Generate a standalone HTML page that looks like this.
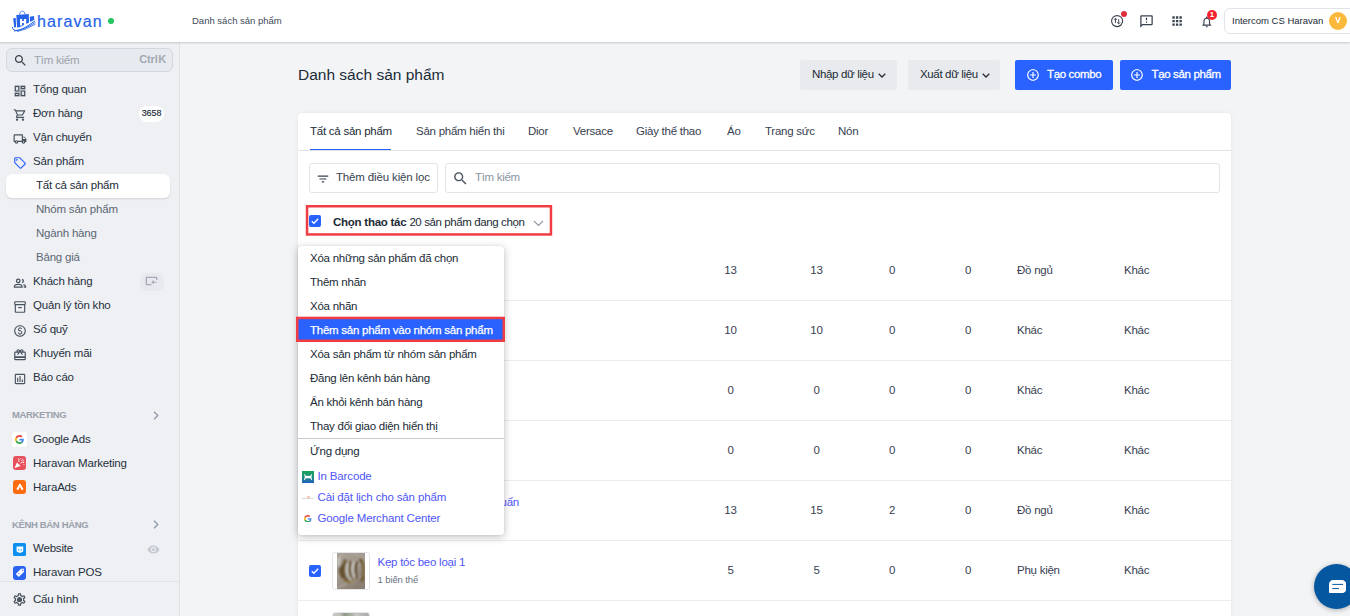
<!DOCTYPE html>
<html lang="vi">
<head>
<meta charset="utf-8">
<title>Danh sách sản phẩm</title>
<style>
*{box-sizing:border-box;margin:0;padding:0}
html,body{width:1350px;height:616px;overflow:hidden}
body{font-family:"Liberation Sans",Arial,sans-serif;font-size:12px;color:#212b36;background:#f3f4f6;position:relative}
.abs{position:absolute}
/* header */
#hdr{position:absolute;left:0;top:0;width:1350px;height:42px;background:#fff;box-shadow:0 1px 2px rgba(0,0,0,.18);z-index:20}
#hdr .crumb{position:absolute;left:192px;top:15px;font-size:9.5px;color:#414a57;line-height:12px}
#logo-text{position:absolute;left:37px;top:11.500px;font-size:16px;line-height:20px;color:#2563eb;letter-spacing:1.150px;font-weight:400;-webkit-text-stroke:.2px #2563eb}
#dot{position:absolute;left:107.500px;top:17.800px;width:6px;height:6px;border-radius:50%;background:#22c55e}
#acct{position:absolute;left:1224px;top:8px;width:140px;height:26px;border:1px solid #e1e4ea;border-radius:6px;background:#fff}
#acct span{position:absolute;left:7px;top:6px;font-size:9.5px;line-height:12px;color:#212b36;white-space:nowrap}
#avatar{position:absolute;left:1329px;top:11.600px;width:18px;height:18px;border-radius:50%;background:#fbb83a;color:#fff;font-size:8.500px;font-weight:700;text-align:center;line-height:17.500px}
/* sidebar */
#side{position:absolute;left:0;top:42px;width:180px;height:574px;background:#eef0f3;border-right:1px solid #dfe2e7;z-index:10}
#search{position:absolute;left:6px;top:6px;width:167px;height:24px;border:1px solid #d3d7de;border-radius:6px;background:#e7eaee}
#search .ph{position:absolute;left:27px;top:5px;font-size:11.5px;line-height:13px;color:#9ca3af;letter-spacing:-.25px}
#search .kb{position:absolute;right:6px;top:4px;font-size:11px;line-height:13px;color:#a3a9b5;font-weight:700;word-spacing:-2.500px;letter-spacing:-.1px}
.nav{position:absolute;left:33px;font-size:11.5px;line-height:14px;color:#27313e;white-space:nowrap;letter-spacing:-.2px}
.sub{position:absolute;left:36px;font-size:11.5px;line-height:14px;color:#5c6773;white-space:nowrap;letter-spacing:-.2px}
.ico{position:absolute;left:12px;width:14px;height:14px}
#active{position:absolute;left:6px;top:131.800px;width:164px;height:24px;background:#fff;border-radius:6px;box-shadow:0 1px 2px rgba(0,0,0,.12)}
.sec{position:absolute;left:12px;font-size:9.500px;line-height:11px;color:#9aa1ad;font-weight:700;letter-spacing:-.35px;margin-top:-.5px}
.badge{position:absolute;left:139px;top:63.700px;width:25px;height:16px;border-radius:8px;background:#fff;font-size:9px;line-height:14.600px;text-align:center;color:#212b36;letter-spacing:-.1px;-webkit-text-stroke:.15px #212b36}
#sidefoot{position:absolute;left:0;top:539px;width:179px;height:35px;border-top:1px solid #e1e4e8;background:#eef0f3}
.app{position:absolute;left:12.700px;width:13.800px;height:13.800px;border-radius:3px;overflow:hidden}
/* main */
h1{position:absolute;left:298px;top:65.200px;font-size:15.5px;line-height:20px;font-weight:400;color:#212b36;white-space:nowrap;letter-spacing:0}
.btn-g{position:absolute;top:60px;height:29.500px;background:#e8eaed;border-radius:3px;letter-spacing:-.35px;font-size:11.5px;line-height:28px;color:#212b36;text-align:left;padding-left:12px;white-space:nowrap}
.btn-b{position:absolute;top:60px;height:30px;background:#2962ff;border-radius:2px;font-size:11.5px;line-height:29px;color:#fff;white-space:nowrap;letter-spacing:-.35px;-webkit-text-stroke:.3px #fff}
.btn-b svg{position:absolute;top:7.800px;width:14px;height:14px}
#card{position:absolute;left:298px;top:113px;width:933px;height:520px;background:#fff;border-radius:3px;box-shadow:0 0 2px rgba(0,0,0,.06),0 0 7px rgba(0,0,0,.035)}
.tab{position:absolute;top:124px;letter-spacing:-.25px;font-size:11.5px;line-height:14px;color:#374151;white-space:nowrap}
#tabline{position:absolute;left:298px;top:150px;width:933px;height:1px;background:#dfe3e8}
#tabact{position:absolute;left:310px;top:148.500px;width:81px;height:1.500px;background:#2962ff}
#fbtn{position:absolute;left:309px;top:163px;width:129px;height:30px;border:1px solid #e1e4e8;border-radius:3px;background:#fff}
#fbtn span{position:absolute;left:26px;top:6px;letter-spacing:-.15px;font-size:11.5px;line-height:14px;color:#374151;white-space:nowrap}
#sbox{position:absolute;left:445px;top:163px;width:775px;height:30px;border:1px solid #e1e4e8;border-radius:3px;background:#fff}
#sbox span{position:absolute;left:29px;top:6px;letter-spacing:-.3px;font-size:11.5px;line-height:14px;color:#8c95a1}
#redbox{position:absolute;left:305.800px;top:205px;width:246.400px;height:30.700px;border:2.500px solid #f03d44}
.cb{position:absolute;width:12px;height:12px;background:#2962ff;border-radius:2px}
.row{position:absolute;left:298px;width:933px;height:1px;background:#ebedf0}
.c{position:absolute;letter-spacing:-.25px;font-size:11.5px;line-height:14px;color:#374151;white-space:nowrap}
.num{text-align:center;width:40px}
.lnk{color:#5055f6}
.thumb{position:absolute;left:332px;width:37.800px;height:38px;border:1px solid #e3e5e9;border-radius:3px;background:#fff;overflow:hidden}
.thumb .img{position:absolute;left:4px;top:0;width:28.500px;height:36px}
/* dropdown */
#dd{position:absolute;left:298px;top:246px;width:206px;height:289px;background:#fff;border-radius:3px;box-shadow:0 2px 8px rgba(0,0,0,.25),0 0 1px rgba(0,0,0,.2);z-index:30}
#dd .it{position:absolute;left:12px;letter-spacing:-.25px;font-size:11.5px;line-height:14px;color:#212b36;white-space:nowrap}
#dd .lk{position:absolute;left:19.500px;letter-spacing:-.15px;font-size:11.5px;line-height:14px;color:#5055f6;white-space:nowrap}
#ddhl{position:absolute;left:-1px;top:71.500px;width:207px;height:23.800px;background:#2962ff}
#ddsep{position:absolute;left:0;top:192px;width:206px;height:1px;background:#c8ccd2}
#chat{position:absolute;left:1313.800px;top:563.500px;width:45px;height:45px;border-radius:50%;background:#0557a0;box-shadow:0 1px 5px rgba(0,0,0,.3);z-index:40}
</style>
</head>
<body>

<!-- main content -->
<h1>Danh sách sản phẩm</h1>
<div class="btn-g" style="left:800px;width:97px">Nhập dữ liệu<svg class="abs" style="left:77.5px;top:13px;width:8px;height:5px" viewBox="0 0 8 5" fill="none" stroke="#212b36" stroke-width="1.250"><path d="M.7.700L4 4l3.300-3.300"/></svg></div>
<div class="btn-g" style="left:908px;width:92px">Xuất dữ liệu<svg class="abs" style="left:73.5px;top:13px;width:8px;height:5px" viewBox="0 0 8 5" fill="none" stroke="#212b36" stroke-width="1.250"><path d="M.7.700L4 4l3.300-3.300"/></svg></div>
<div class="btn-b" style="left:1015px;width:98px;padding-left:32px"><svg style="left:11px" viewBox="0 0 24 24" fill="#fff"><path d="M13 7h-2v4H7v2h4v4h2v-4h4v-2h-4V7zm-1-5C6.480 2 2 6.480 2 12s4.480 10 10 10 10-4.480 10-10S17.520 2 12 2zm0 18c-4.410 0-8-3.590-8-8s3.590-8 8-8 8 3.590 8 8-3.590 8-8 8z"/></svg>Tạo combo</div>
<div class="btn-b" style="left:1120px;width:111px;padding-left:31.500px"><svg style="left:10.300px" viewBox="0 0 24 24" fill="#fff"><path d="M13 7h-2v4H7v2h4v4h2v-4h4v-2h-4V7zm-1-5C6.480 2 2 6.480 2 12s4.480 10 10 10 10-4.480 10-10S17.520 2 12 2zm0 18c-4.410 0-8-3.590-8-8s3.590-8 8-8 8 3.590 8 8-3.590 8-8 8z"/></svg>Tạo sản phẩm</div>

<div id="card"></div>
<div class="tab" style="left:310px;color:#212b36">Tất cả sản phẩm</div>
<div class="tab" style="left:416px">Sản phẩm hiển thi</div>
<div class="tab" style="left:528px">Dior</div>
<div class="tab" style="left:573px">Versace</div>
<div class="tab" style="left:636px">Giày thể thao</div>
<div class="tab" style="left:727px">Áo</div>
<div class="tab" style="left:765px">Trang sức</div>
<div class="tab" style="left:838px">Nón</div>
<div id="tabline"></div>
<div id="tabact"></div>

<div id="fbtn"><svg class="abs" style="left:5.500px;top:7.500px;width:14px;height:14px" viewBox="0 0 24 24" fill="#3a4350"><path d="M10 18h4v-2h-4v2zM3 6v2h18V6H3zm3 7h12v-2H6v2z"/></svg><span>Thêm điều kiện lọc</span></div>
<div id="sbox"><svg class="abs" style="left:5.500px;top:5.500px;width:17px;height:17px" viewBox="0 0 24 24" fill="#4f5763"><path d="M15.5 14h-.79l-.28-.27C15.410 12.590 16 11.110 16 9.500 16 5.910 13.090 3 9.500 3S3 5.910 3 9.500 5.910 16 9.500 16c1.610 0 3.090-.59 4.230-1.570l.27.28v.79l5 4.990L20.490 19l-4.990-5zm-6 0C7.010 14 5 11.990 5 9.500S7.010 5 9.500 5 14 7.010 14 9.500 11.990 14 9.500 14z"/></svg><span>Tìm kiếm</span></div>

<svg class="abs" style="left:305px;top:204px;width:249px;height:33px" viewBox="0 0 249 33"><rect x="2.050" y="2.250" width="243.900" height="28.200" fill="none" stroke="#f03d44" stroke-width="2.500"/></svg>
<div class="cb" style="left:309px;top:215px"><svg viewBox="0 0 12 12" style="position:absolute;left:0;top:0;width:12px;height:12px" fill="none" stroke="#fff" stroke-width="1.300"><path d="M2.800 6.200l2.100 2.100 4.300-4.600"/></svg></div>
<div class="c" style="left:333px;top:215px;color:#212b36"><b>Chọn thao tác</b> <span style="letter-spacing:-.4px">20 sản phẩm đang chọn</span></div>

<svg class="abs" style="left:532.500px;top:219.800px;width:11px;height:6.600px" viewBox="0 0 10 6" fill="none" stroke="#8c95a1" stroke-width="1"><path d="M.8.800L5 5l4.200-4.200"/></svg>
<!-- rows -->
<div class="row" style="top:300px"></div>
<div class="row" style="top:360px"></div>
<div class="row" style="top:420px"></div>
<div class="row" style="top:480px"></div>
<div class="row" style="top:540px"></div>
<div class="row" style="top:600px"></div>

<div class="c num" style="left:710.500px;top:263px">13</div><div class="c num" style="left:796.500px;top:263px">13</div><div class="c num" style="left:872px;top:263px">0</div><div class="c num" style="left:948px;top:263px">0</div><div class="c" style="left:1017px;top:263px">Đồ ngủ</div><div class="c" style="left:1124px;top:263px">Khác</div>
<div class="c num" style="left:710.500px;top:323px">10</div><div class="c num" style="left:796.500px;top:323px">10</div><div class="c num" style="left:872px;top:323px">0</div><div class="c num" style="left:948px;top:323px">0</div><div class="c" style="left:1017px;top:323px">Khác</div><div class="c" style="left:1124px;top:323px">Khác</div>
<div class="c num" style="left:710.500px;top:383px">0</div><div class="c num" style="left:796.500px;top:383px">0</div><div class="c num" style="left:872px;top:383px">0</div><div class="c num" style="left:948px;top:383px">0</div><div class="c" style="left:1017px;top:383px">Khác</div><div class="c" style="left:1124px;top:383px">Khác</div>
<div class="c num" style="left:710.500px;top:443px">0</div><div class="c num" style="left:796.500px;top:443px">0</div><div class="c num" style="left:872px;top:443px">0</div><div class="c num" style="left:948px;top:443px">0</div><div class="c" style="left:1017px;top:443px">Khác</div><div class="c" style="left:1124px;top:443px">Khác</div>
<div class="c num" style="left:710.500px;top:503px">13</div><div class="c num" style="left:796.500px;top:503px">15</div><div class="c num" style="left:872px;top:503px">2</div><div class="c num" style="left:948px;top:503px">0</div><div class="c" style="left:1017px;top:503px">Đồ ngủ</div><div class="c" style="left:1124px;top:503px">Khác</div>
<div class="c num" style="left:710.500px;top:563px">5</div><div class="c num" style="left:796.500px;top:563px">5</div><div class="c num" style="left:872px;top:563px">0</div><div class="c num" style="left:948px;top:563px">0</div><div class="c" style="left:1017px;top:563px">Phụ kiện</div><div class="c" style="left:1124px;top:563px">Khác</div>
<div class="c lnk" style="right:831px;top:495px;font-size:11.500px;letter-spacing:-.25px">Đồ bộ ngủ mặc nhà cho bé Tuấn</div>
<div class="cb" style="left:309px;top:565px"><svg viewBox="0 0 12 12" style="position:absolute;left:0;top:0;width:12px;height:12px" fill="none" stroke="#fff" stroke-width="1.300"><path d="M2.800 6.200l2.100 2.100 4.300-4.600"/></svg></div>
<div class="thumb" style="top:552px"><svg class="abs" style="left:4.200px;top:0;width:28.300px;height:36px" viewBox="0 0 28 36" preserveAspectRatio="none">
  <defs><filter id="bl" x="-20%" y="-20%" width="140%" height="140%"><feGaussianBlur stdDeviation=".8"/></filter><linearGradient id="tg" x1="0" y1="0" x2=".6" y2="1"><stop offset="0" stop-color="#aba299"/><stop offset=".55" stop-color="#a0968b"/><stop offset="1" stop-color="#8a7e72"/></linearGradient></defs>
  <rect width="28" height="36" fill="url(#tg)"/>
  <g filter="url(#bl)" fill="none" stroke-linecap="round">
    <path d="M0 24L28 8M0 35L28 22M6 0L0 9M16 0L28 5" stroke="#b5aca2" stroke-width="1"/>
    <path d="M4.500 13q-2 6 1 11" stroke="#5e4a28" stroke-width="3"/>
    <path d="M8 8q-3 9 0 17q2 4 6 4" stroke="#6b5630" stroke-width="3.200"/>
    <path d="M13.500 9q-3 9 1 18" stroke="#6a552e" stroke-width="2.600"/>
    <path d="M19.500 10q-3 7 0 15" stroke="#5e4a28" stroke-width="2.800"/>
    <path d="M23.500 7q6 9 1 20" stroke="#6b5428" stroke-width="3"/>
    <path d="M2.500 5q-2 4 0 8M10.500 11q-2 7 1 13M16.500 9q-2 8 1 15M13 25q0 3 2 5" stroke="#d9dcd6" stroke-width="1.500"/>
    <path d="M26.500 11q2 6 0 12" stroke="#a8946a" stroke-width="1"/>
    <path d="M8 28q4 2 8 0" stroke="#8d7338" stroke-width="2"/>
  </g></svg></div>
<div class="c lnk" style="left:377.500px;top:555px;font-size:11.500px;letter-spacing:-.25px">Kẹp tóc beo loại 1</div>
<div class="c" style="left:377.500px;top:573px;font-size:9.500px;color:#6b7280;letter-spacing:-.1px">1 biến thể</div>
<div class="thumb" style="top:612px"><div class="img" style="left:0;width:36px;background:linear-gradient(90deg,#c9c9c4 0%,#bfc0ba 20%,#8f9a88 32%,#a9b0a4 50%,#c5c6c4 65%,#a8aaa6 100%)"></div></div>

<!-- dropdown -->
<div id="dd">
  <div class="it" style="top:5px">Xóa những sản phẩm đã chọn</div>
  <div class="it" style="top:29px">Thêm nhãn</div>
  <div class="it" style="top:53px">Xóa nhãn</div>
  <div id="ddhl"></div><svg class="abs" style="left:-3px;top:69px;width:212px;height:29px" viewBox="0 0 212 29"><rect x="2.250" y="2.950" width="206.500" height="22.800" fill="none" stroke="#f03d44" stroke-width="2.500"/></svg>
  <div class="it" style="top:77px;color:#fff;-webkit-text-stroke:.25px #fff">Thêm sản phẩm vào nhóm sản phẩm</div>
  <div class="it" style="top:101px">Xóa sản phẩm từ nhóm sản phẩm</div>
  <div class="it" style="top:125px">Đăng lên kênh bán hàng</div>
  <div class="it" style="top:149px">Ẩn khỏi kênh bán hàng</div>
  <div class="it" style="top:173px">Thay đổi giao diện hiển thị</div>
  <div id="ddsep"></div>
  <div class="it" style="top:198px">Ứng dụng</div>

  <div class="abs" style="left:3.800px;top:224.800px;width:12.200px;height:12.200px;background:linear-gradient(180deg,#1fa35c 0%,#1c8f7a 50%,#1e5fc4 100%)"><svg viewBox="0 0 12 12" style="position:absolute;left:0;top:0;width:12.200px;height:12.200px"><path d="M2.300 3.300q1 .7.900 2.700-.1 2-.9 2.700M9.700 3.300q-1 .7-.9 2.700.1 2 .9 2.700" stroke="#fff" stroke-width="1.100" fill="none"/><path d="M3 4.800h6v2.400H3z" fill="#fff"/></svg></div>
  <div class="abs" style="left:4px;top:251.600px;width:12px;height:1.200px;background:#d9d9dc"></div>
  <div class="abs" style="left:8.500px;top:250.400px;width:3px;height:2px;background:#f3c3a8;border-radius:1px"></div>
  <svg viewBox="0 0 48 48" class="abs" style="left:6.300px;top:268.800px;width:7.600px;height:7.600px"><path fill="#EA4335" d="M24 9.500c3.540 0 6.710 1.220 9.210 3.600l6.850-6.850C35.900 2.380 30.470 0 24 0 14.620 0 6.510 5.380 2.560 13.220l7.980 6.190C12.430 13.720 17.740 9.500 24 9.500z"/><path fill="#4285F4" d="M46.980 24.550c0-1.570-.15-3.090-.38-4.550H24v9.020h12.940c-.58 2.960-2.260 5.480-4.780 7.180l7.730 6c4.510-4.180 7.090-10.360 7.090-17.650z"/><path fill="#FBBC05" d="M10.530 28.590c-.48-1.450-.76-2.990-.76-4.590s.27-3.140.76-4.590l-7.980-6.190C.92 16.460 0 20.120 0 24c0 3.880.92 7.540 2.560 10.780l7.970-6.190z"/><path fill="#34A853" d="M24 48c6.480 0 11.930-2.130 15.890-5.810l-7.730-6c-2.150 1.450-4.920 2.300-8.160 2.300-6.260 0-11.570-4.220-13.470-9.910l-7.980 6.190C6.510 42.620 14.620 48 24 48z"/></svg>
  <div class="lk" style="top:223px">In Barcode</div>
  <div class="lk" style="top:244px">Cài đặt lịch cho sản phẩm</div>
  <div class="lk" style="top:265px">Google Merchant Center</div>
</div>

<!-- sidebar -->
<div id="side">
  <svg class="ico" style="left:12.500px;top:41.5px;width:14px;height:14px" viewBox="0 0 24 24" fill="#4a5360" ><path stroke="#4a5360" stroke-width=".3" d="M19 5v2h-4V5h4M9 5v6H5V5h4m10 8v6h-4v-6h4M9 17v2H5v-2h4M21 3h-8v6h8V3zM11 3H3v10h8V3zm10 8h-8v10h8V11zm-10 4H3v6h8v-6z"/></svg>
  <svg class="ico" style="left:12.500px;top:65.5px;width:14px;height:14px" viewBox="0 0 24 24" fill="#4a5360" ><path d="M15.55 13c.75 0 1.41-.41 1.75-1.03l3.58-6.49c.37-.66-.11-1.48-.87-1.48H5.21l-.94-2H1v2h2l3.6 7.59-1.35 2.44C4.52 15.37 5.48 17 7 17h12v-2H7l1.1-2h7.45zM6.16 6h12.15l-2.76 5H8.53L6.16 6zM7 18c-1.1 0-1.99.9-1.99 2S5.9 22 7 22s2-.9 2-2-.9-2-2-2zm10 0c-1.1 0-1.99.9-1.99 2s.89 2 1.99 2 2-.9 2-2-.9-2-2-2z"/></svg>
  <svg class="ico" style="left:12.500px;top:89.5px;width:14px;height:14px" viewBox="0 0 24 24" fill="#4a5360" ><path d="M20 8h-3V4H3c-1.1 0-2 .9-2 2v11h2c0 1.66 1.34 3 3 3s3-1.34 3-3h6c0 1.66 1.34 3 3 3s3-1.34 3-3h2v-5l-3-4zm-.5 1.5l1.96 2.5H17V9.5h2.5zM6 18c-.55 0-1-.45-1-1s.45-1 1-1 1 .45 1 1-.45 1-1 1zm2.22-3c-.55-.61-1.33-1-2.22-1s-1.670.39-2.22 1H3V6h12v9H8.22zM18 18c-.55 0-1-.45-1-1s.45-1 1-1 1 .45 1 1-.45 1-1 1z"/></svg>
  <svg class="ico" style="left:12.500px;top:113.5px;width:14px;height:14px" viewBox="0 0 24 24" fill="#2962ff" ><path d="M21.41 11.58l-9-9C12.05 2.22 11.55 2 11 2H4c-1.1 0-2 .9-2 2v7c0 .55.22 1.05.59 1.42l9 9c.36.36.86.58 1.41.58s1.05-.22 1.41-.59l7-7c.37-.36.59-.86.59-1.41s-.23-1.06-.59-1.42zM13 20.010L4 11V4h7v-.01l9 9-7 7.020z"/><circle cx="6.5" cy="6.5" r="1.5"/></svg>
  <svg class="ico" style="left:12.500px;top:233.5px;width:14px;height:14px" viewBox="0 0 24 24" fill="#4a5360" ><g fill="none" stroke="#4a5360" stroke-width="2.200"><circle cx="9" cy="8.5" r="3"/><path d="M2.500 19v-1.500c0-2.200 4.300-3.300 6.500-3.300s6.500 1.100 6.500 3.300V19z"/><path d="M15.500 5.600a3 3 0 0 1 0 5.800M18 14.800c1.900.6 3.500 1.500 3.500 2.800V19h-3"/></g></svg>
  <svg class="ico" style="left:12.500px;top:257.5px;width:14px;height:14px" viewBox="0 0 24 24" fill="#4a5360" ><path d="M20 2H4c-1 0-2 .9-2 2v3.010c0 .72.430 1.340 1 1.690V20c0 1.100 1.100 2 2 2h14c.9 0 2-.9 2-2V8.700c.57-.35 1-.97 1-1.690V4c0-1.100-1-2-2-2zm-1 18H5V9h14v11zm1-13H4V4h16v3z"/><path d="M9 12h6v2H9z"/></svg>
  <svg class="ico" style="left:12.500px;top:281.5px;width:14px;height:14px" viewBox="0 0 24 24" fill="#4a5360" ><path d="M12 2C6.480 2 2 6.480 2 12s4.480 10 10 10 10-4.480 10-10S17.520 2 12 2zm0 18c-4.410 0-8-3.590-8-8s3.590-8 8-8 8 3.590 8 8-3.590 8-8 8zm.89-8.900c-1.780-.59-2.640-.96-2.640-1.900 0-1.020 1.110-1.390 1.810-1.390 1.310 0 1.790.99 1.900 1.340l1.580-.67c-.15-.44-.82-1.910-2.660-2.230V5h-1.750v1.260c-2.600.56-2.620 2.850-2.620 2.960 0 2.270 2.250 2.910 3.350 3.310 1.580.56 2.280 1.070 2.280 2.030 0 1.130-1.050 1.610-1.980 1.610-1.820 0-2.340-1.870-2.400-2.090l-1.660.67c.63 2.190 2.280 2.780 3.020 2.960V19h1.750v-1.240c.52-.09 3.020-.59 3.020-3.220.010-1.390-.6-2.610-3-3.440z"/></svg>
  <svg class="ico" style="left:12.500px;top:305.5px;width:14px;height:14px" viewBox="0 0 24 24" fill="#4a5360" ><path d="M20 6h-2.180c.11-.31.180-.65.180-1 0-1.660-1.340-3-3-3-1.050 0-1.960.54-2.500 1.350l-.5.670-.5-.68C10.960 2.540 10.050 2 9 2 7.340 2 6 3.340 6 5c0 .35.070.69.180 1H4c-1.110 0-1.990.89-1.990 2L2 19c0 1.110.89 2 2 2h16c1.110 0 2-.89 2-2V8c0-1.110-.89-2-2-2zm-5-2c.55 0 1 .45 1 1s-.45 1-1 1-1-.45-1-1 .45-1 1-1zM9 4c.55 0 1 .45 1 1s-.45 1-1 1-1-.45-1-1 .45-1 1-1zm11 15H4v-2h16v2zm0-5H4V8h5.080L7 10.830 8.620 12 12 7.400l3.380 4.600L17 10.830 14.920 8H20v6z"/></svg>
  <svg class="ico" style="left:12.500px;top:329.5px;width:14px;height:14px" viewBox="0 0 24 24" fill="#4a5360" ><path d="M9 17H7v-7h2v7zm4 0h-2V7h2v10zm4 0h-2v-4h2v4zm2 2H5V5h14v14zm0-16H5c-1.100 0-2 .9-2 2v14c0 1.100.9 2 2 2h14c1.100 0 2-.9 2-2V5c0-1.100-.9-2-2-2z"/></svg>
  <div id="search"><span class="ph">Tìm kiếm</span><span class="kb">Ctrl K</span></div>
  <svg class="ico" style="left:13px;top:11px;width:15px;height:15px" viewBox="0 0 24 24" fill="#3a424d" ><path d="M15.5 14h-.79l-.28-.27C15.410 12.590 16 11.110 16 9.500 16 5.910 13.090 3 9.500 3S3 5.910 3 9.500 5.910 16 9.500 16c1.610 0 3.090-.59 4.230-1.570l.27.28v.79l5 4.990L20.490 19l-4.990-5zm-6 0C7.010 14 5 11.990 5 9.500S7.010 5 9.500 5 14 7.010 14 9.500 11.990 14 9.500 14z"/></svg>
  <div class="nav" style="top:40px">Tổng quan</div>
  <div class="nav" style="top:64px">Đơn hàng</div>
  <div class="badge">3658</div>
  <div class="nav" style="top:88px">Vận chuyển</div>
  <div class="nav" style="top:112px">Sản phẩm</div>
  <div id="active"></div>
  <div class="sub" style="top:136px;color:#212b36">Tất cả sản phẩm</div>
  <div class="sub" style="top:160px">Nhóm sản phẩm</div>
  <div class="sub" style="top:184px">Ngành hàng</div>
  <div class="sub" style="top:208px">Bảng giá</div>
  <div class="nav" style="top:232px">Khách hàng</div>
  <div class="nav" style="top:256px">Quản lý tồn kho</div>
  <div class="nav" style="top:280px">Số quỹ</div>
  <div class="nav" style="top:304px">Khuyến mãi</div>
  <div class="nav" style="top:328px">Báo cáo</div>
  <div class="sec" style="top:367.500px">MARKETING</div>
  <div class="nav" style="top:390px">Google Ads</div>
  <div class="nav" style="top:414px">Haravan Marketing</div>
  <div class="nav" style="top:438px">HaraAds</div>
  <div class="sec" style="top:477.500px">KÊNH BÁN HÀNG</div>
  <div class="nav" style="top:499px">Website</div>
  <div class="nav" style="top:523px">Haravan POS</div>

  <div class="app" style="top:390.200px;background:#fff;left:12.200px;width:14.600px;height:14.600px"><svg viewBox="0 0 48 48" style="position:absolute;left:2.800px;top:2.800px;width:9px;height:9px"><path fill="#EA4335" d="M24 9.500c3.540 0 6.710 1.220 9.210 3.600l6.850-6.850C35.900 2.380 30.470 0 24 0 14.620 0 6.510 5.380 2.560 13.220l7.980 6.190C12.430 13.720 17.740 9.500 24 9.500z"/><path fill="#4285F4" d="M46.980 24.550c0-1.570-.15-3.090-.38-4.550H24v9.020h12.940c-.58 2.960-2.260 5.480-4.780 7.180l7.730 6c4.510-4.180 7.090-10.360 7.090-17.650z"/><path fill="#FBBC05" d="M10.530 28.590c-.48-1.450-.76-2.990-.76-4.590s.27-3.140.76-4.590l-7.980-6.190C.92 16.460 0 20.120 0 24c0 3.880.92 7.540 2.560 10.780l7.970-6.190z"/><path fill="#34A853" d="M24 48c6.480 0 11.930-2.130 15.890-5.810l-7.730-6c-2.150 1.450-4.920 2.300-8.160 2.300-6.260 0-11.570-4.220-13.470-9.910l-7.980 6.190C6.510 42.620 14.620 48 24 48z"/></svg></div>
  <div class="app" style="top:414.400px;background:#e8505b"><svg viewBox="0 0 14 14" style="position:absolute;left:0;top:0;width:13.800px;height:13.800px"><path d="M1.500 12.300L4 6.500l3.800 3.600z" fill="#fff"/><g stroke="#fff" stroke-width=".9" fill="none" stroke-linecap="round"><path d="M6 5.500q.8-1.600-.3-2.800M7.800 7q1.500-1.500 3.200-.6M8.800 4.800l1.400-1.500M11 8.800h.2M7.800 2.500h.2M10.800 5h.2"/></g></svg></div>
  <div class="app" style="top:438.400px;background:#ff6b0f"><svg viewBox="0 0 14 14" style="position:absolute;left:0;top:0;width:13.800px;height:13.800px"><g stroke="#fff" stroke-width="2" stroke-linecap="round" fill="none"><path d="M7 4.800l2.400 4.400M6.600 5.500L5 8.600"/></g><circle cx="4.700" cy="9" r="1.100" fill="#fff"/></svg></div>
  <div class="app" style="top:500.500px;background:#0c8ff0;border-radius:1.500px"><svg viewBox="0 0 14 14" style="position:absolute;left:0;top:0;width:13.800px;height:13.800px"><path d="M3.600 3.600h6.800v4.200q0 .9-.9 1.300L7 10.200 4.500 9.100q-.9-.4-.9-1.300z" fill="#fff"/><path d="M5.200 6.300h1.100v1.200H5.200zM7.700 6.300h1.100v1.200H7.700z" fill="#0c8ff0"/></svg></div>
  <div class="app" style="top:524.400px;background:#2b62f0"><svg viewBox="0 0 14 14" style="position:absolute;left:0;top:0;width:13.800px;height:13.800px"><path d="M8.200 2.800l3 .1.100 3-5.400 5.300-3.100-3.100z" fill="#fff"/><circle cx="9.800" cy="4.300" r=".7" fill="#2b62f0"/><path d="M5.600 7.200l1.200 1.200" stroke="#2b62f0" stroke-width=".9"/></svg></div>
  <svg class="abs" style="left:153px;top:368.500px;width:6px;height:9px" viewBox="0 0 6 9" fill="none" stroke="#8c95a5" stroke-width="1.200"><path d="M1 .800L4.800 4.500 1 8.200"/></svg>
  <svg class="abs" style="left:153px;top:478px;width:6px;height:9px" viewBox="0 0 6 9" fill="none" stroke="#8c95a5" stroke-width="1.200"><path d="M1 .800L4.800 4.500 1 8.200"/></svg>
  <svg class="abs" style="left:147px;top:501px;width:13px;height:13px" viewBox="0 0 24 24" fill="#c3c8d1"><path d="M12 4.500C7 4.500 2.730 7.610 1 12c1.730 4.390 6 7.500 11 7.500s9.270-3.110 11-7.500c-1.730-4.390-6-7.500-11-7.500zM12 17c-2.760 0-5-2.240-5-5s2.240-5 5-5 5 2.240 5 5-2.240 5-5 5zm0-8c-1.660 0-3 1.340-3 3s1.340 3 3 3 3-1.340 3-3-1.340-3-3-3z"/></svg>
  <div class="abs" style="left:140.200px;top:231px;width:23.800px;height:17.600px;border-radius:7px;background:#e7e9ee"></div>
  <svg class="abs" style="left:145.300px;top:234.300px;width:13px;height:10px" viewBox="0 0 13 10" fill="none" stroke="#a2aab8" stroke-width="1.300"><path d="M6.500 8.600H1.800Q1.300 8.600 1.300 8.100V1.800Q1.300 1.300 1.800 1.300h9.400q.5 0 .5.500V4"/><path d="M11.500 6.200H7.200M8.700 4.700L7.200 6.200l1.500 1.500" stroke-width="1.100"/></svg>
  <div id="sidefoot"><svg class="ico" style="left:12px;top:10.300px;width:15px;height:15px" viewBox="0 0 24 24" fill="#4a5360" ><path d="M19.430 12.980c.04-.32.070-.64.070-.98 0-.34-.03-.66-.07-.98l2.110-1.650c.19-.15.240-.42.120-.64l-2-3.460c-.09-.16-.26-.25-.44-.25-.06 0-.12.010-.17.030l-2.490 1c-.52-.4-1.080-.73-1.690-.98l-.38-2.650C14.460 2.180 14.250 2 14 2h-4c-.25 0-.46.180-.49.420l-.38 2.650c-.61.250-1.170.59-1.690.98l-2.490-1c-.06-.02-.12-.03-.18-.03-.17 0-.34.090-.43.250l-2 3.460c-.13.220-.07.490.12.640l2.110 1.650c-.4.320-.7.650-.07.980 0 .33.030.66.070.98l-2.110 1.650c-.19.150-.24.420-.12.640l2 3.460c.9.160.26.250.44.250.06 0 .12-.1.170-.03l2.490-1c.52.4 1.080.73 1.690.98l.38 2.650c.3.240.24.420.49.420h4c.25 0 .46-.18.490-.42l.38-2.650c.61-.25 1.170-.59 1.690-.98l2.490 1c.6.020.12.030.18.030.17 0 .34-.9.430-.25l2-3.460c.12-.22.070-.49-.12-.64l-2.110-1.650zm-1.980-1.710c.4.310.5.520.5.730 0 .21-.2.430-.5.730l-.14 1.130.89.700 1.080.84-.7 1.210-1.270-.51-1.040-.42-.9.680c-.43.320-.84.560-1.250.73l-1.060.43-.16 1.130-.2 1.350h-1.400l-.19-1.350-.16-1.130-1.060-.43c-.43-.18-.83-.41-1.230-.71l-.91-.7-1.060.43-1.270.51-.7-1.210 1.080-.84.890-.7-.14-1.130c-.03-.31-.05-.54-.05-.74s.02-.43.05-.73l.14-1.130-.89-.7-1.080-.84.7-1.210 1.270.51 1.040.42.9-.68c.43-.32.840-.56 1.250-.73l1.060-.43.160-1.130.2-1.350h1.390l.19 1.350.16 1.130 1.060.43c.43.180.83.410 1.230.71l.91.700 1.060-.43 1.270-.51.700 1.210-1.070.85-.89.700.14 1.130zM12 8c-2.210 0-4 1.790-4 4s1.790 4 4 4 4-1.790 4-4-1.790-4-4-4zm0 6c-1.100 0-2-.9-2-2s.9-2 2-2 2 .9 2 2-.9 2-2 2z"/></svg><div class="abs" style="left:17.300px;top:15.600px;width:4.400px;height:4.400px;border-radius:50%;background:#4a5360"></div><div class="nav" style="top:10px">Cấu hình</div></div>
</div>

<!-- header -->
<div id="hdr">
  <svg class="abs" style="left:10px;top:8px;width:28px;height:26px" viewBox="10 8 28 26">
    <g fill="#2563eb">
      <polygon points="13.2,18.3 15.8,18 16.1,27 14.2,27.8"/>
      <polygon points="16.3,14.9 28.8,14 29,22.4 19.5,27.3 17.1,27.6"/>
      <polygon points="29.8,16.8 34,16 34.3,19.8 30,22.1"/>
    </g>
    <path d="M19.600 14.700C19.600 10.200 24.800 10.200 24.900 14.200" fill="none" stroke="#2563eb" stroke-width=".8"/>
    <path d="M20 19h2.100v2.100h1.800V19h2.300v5.300l-2.300 1.200v-2.400h-1.800v2.400H20z" fill="#fff"/>
    <g fill="none" stroke="#2563eb" stroke-linecap="round">
      <path d="M12.400 27.300Q12.600 31.300 18 30.300Q25 28.600 34.800 21" stroke-width="1"/>
      <path d="M14.200 31Q24 30.200 35 22.700" stroke-width=".9"/>
      <path d="M17.500 31.500Q26 30 35.200 24.300" stroke-width=".8"/>
    </g>
  </svg>
  <div id="logo-text">haravan</div>
  <div id="dot"></div>
  <div class="crumb">Danh sách sản phẩm</div>

  <svg class="abs" style="left:1109.700px;top:13.700px;width:14.200px;height:14.200px" viewBox="0 0 24 24" fill="none" stroke="#3a4350" stroke-width="1.900"><circle cx="12" cy="12" r="9.300"/><path d="M9.300 15.300V7.300M6.700 9.900l2.600-2.600 2.600 2.600M14.700 8.700v8M12.100 14.100l2.600 2.600 2.600-2.600" stroke-width="1.600"/></svg>
  <div class="abs" style="left:1121px;top:11px;width:6px;height:6px;border-radius:50%;background:#e02d3c"></div>
  <svg class="abs" style="left:1139px;top:14px;width:15px;height:15px" viewBox="0 0 24 24" fill="#3a4350"><path d="M20 2H4c-1.100 0-1.990.9-1.990 2L2 22l4-4h14c1.100 0 2-.9 2-2V4c0-1.100-.9-2-2-2zm0 14H5.170L4 17.170V4h16v12zm-9-4h2v2h-2zm0-6h2v4h-2z"/></svg>
  <svg class="abs" style="left:1169.500px;top:14.200px;width:14.200px;height:14.200px" viewBox="0 0 24 24" fill="#3a4350"><path d="M4 8h4V4H4v4zm6 12h4v-4h-4v4zm-6 0h4v-4H4v4zm0-6h4v-4H4v4zm6 0h4v-4h-4v4zm6-10v4h4V4h-4zm-6 4h4V4h-4v4zm6 6h4v-4h-4v4zm0 6h4v-4h-4v4z"/></svg>
  <svg class="abs" style="left:1199.700px;top:14.600px;width:13.500px;height:13.500px" viewBox="0 0 24 24" fill="#3a4350"><path d="M12 22c1.100 0 2-.9 2-2h-4c0 1.100.9 2 2 2zm6-6v-5c0-3.070-1.630-5.640-4.500-6.320V4c0-.83-.67-1.500-1.500-1.500s-1.500.67-1.500 1.500v.68C7.640 5.360 6 7.920 6 11v5l-2 2v1h16v-1l-2-2zm-2 1H8v-6c0-2.480 1.510-4.500 4-4.500s4 2.020 4 4.500v6z"/></svg>
  <div class="abs" style="left:1207px;top:10px;width:10px;height:10px;border-radius:50%;background:#f5222d;color:#fff;font-size:8px;font-weight:700;line-height:10px;text-align:center">1</div>
  <div id="acct"><span>Intercom CS Haravan</span></div>
  <div id="avatar">V</div>
</div>

<div id="chat"><svg class="abs" style="left:15px;top:16.300px;width:17.500px;height:13.200px" viewBox="0 0 17.500 13.200"><path d="M4.200 0h8.500a4.800 4.800 0 0 1 4.800 4.800v3.600a4.800 4.800 0 0 1-4.800 4.800H1.200Q0 13.200 0 12V4.200A4.200 4.200 0 0 1 4.200 0z" fill="#fff"/><path d="M3.300 4.400h10.800M3.300 8.600h6.700" stroke="#0557a0" stroke-width="1" fill="none"/></svg></div>
</body>
</html>
